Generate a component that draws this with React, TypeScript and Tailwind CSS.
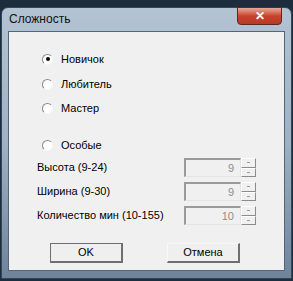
import React from 'react';

const font = { fontFamily: '"Liberation Sans", Arial, sans-serif' };

function Radio({ label, checked, className = '' }: { label: string; checked?: boolean; className?: string }) {
    return (
        <div className={`flex items-center h-[14px] ${className}`}>
            <div className="w-[11px] h-[11px] rounded-full border border-t-[#8a8a8a] border-l-[#8a8a8a] border-r-[#f5f5f5] border-b-[#f5f5f5] bg-white flex items-center justify-center ml-[33px]">
                {checked && <div className="w-[4px] h-[4px] rounded-full bg-black" />}
            </div>
            <span className="ml-[8px] text-[11px] text-black leading-none">{label}</span>
        </div>
    );
}

function Spin({ label, value, className = '' }: { label: string; value: string; className?: string }) {
    return (
        <div className={`flex items-center h-[19px] ${className}`}>
            <span className="ml-[28px] w-[147px] text-[11px] text-black leading-none">{label}</span>
            <div className="w-[57px] h-[19px] border-t-2 border-l-2 border-t-[#9a9a9a] border-l-[#9a9a9a] border-b border-r border-b-[#e4e4e4] border-r-[#e4e4e4] bg-[#f0f0f0] flex items-center justify-end pr-[6px] text-[11px] text-[#8d8d8d]">
                {value}
            </div>
            <div className="flex flex-col w-[15px] h-[19px]">
                <div className="flex-1 border-t border-l border-t-white border-l-white border-r border-b border-r-[#8c8c8c] border-b-[#8c8c8c] bg-[#f0f0f0] flex items-center justify-center">
                    <div className="w-[3px] h-[1px] bg-[#9a9a9a]" />
                </div>
                <div className="flex-1 border-t border-l border-t-white border-l-white border-r border-b border-r-[#8c8c8c] border-b-[#8c8c8c] bg-[#f0f0f0] flex items-center justify-center">
                    <div className="w-[3px] h-[1px] bg-[#9a9a9a]" />
                </div>
            </div>
        </div>
    );
}

function Btn({ label, primary }: { label: string; primary?: boolean }) {
    return (
        <div className={`w-[73px] h-[20px] bg-[#efefef] flex items-center justify-center text-[11px] text-black border ${primary ? 'border-[#6f6f6f] border-b-2 border-r-2' : 'border-t-[#f8f8f8] border-l-[#f8f8f8] border-b-2 border-r-2 border-b-[#6f6f6f] border-r-[#6f6f6f]'}`}>
            {label}
        </div>
    );
}

export default function App() {
    return (
        <div className="w-[293px] h-[281px] bg-[#1e2d3d] overflow-hidden pt-[7px] px-[1px]" style={font}>
            <div className="h-[272px] rounded-t-[7px] border border-[#33475c] bg-gradient-to-b from-[#b4c3d2] via-[#9fb1c4] to-[#6f8399] flex flex-col">
                <div className="h-[23px] flex items-start justify-between">
                    <span className="ml-[7px] mt-[5px] text-[12px] text-[#111] leading-none">Сложность</span>
                    <div className="mr-[9px] -mt-[1px] w-[45px] h-[18px] rounded-b-[4px] border border-[#5a2a22] bg-gradient-to-b from-[#e8a89a] via-[#c8422c] to-[#b73a26] flex items-center justify-center">
                        <span className="text-white text-[12px] font-bold leading-none">✕</span>
                    </div>
                </div>
                <div className="mx-[6px] mb-[7px] flex-1 bg-[#f0f0f0] border border-[#51667c] flex flex-col">
                    <Radio label="Новичок" checked className="mt-[20px]" />
                    <Radio label="Любитель" className="mt-[11px]" />
                    <Radio label="Мастер" className="mt-[10px]" />
                    <Radio label="Особые" className="mt-[23px]" />
                    <Spin label="Высота (9-24)" value="9" className="mt-[6px]" />
                    <Spin label="Ширина (9-30)" value="9" className="mt-[5px]" />
                    <Spin label="Количество мин (10-155)" value="10" className="mt-[5px]" />
                    <div className="flex mt-[18px] ml-[41px] gap-[44px]">
                        <Btn label="OK" primary />
                        <Btn label="Отмена" />
                    </div>
                </div>
            </div>
        </div>
    );
}
